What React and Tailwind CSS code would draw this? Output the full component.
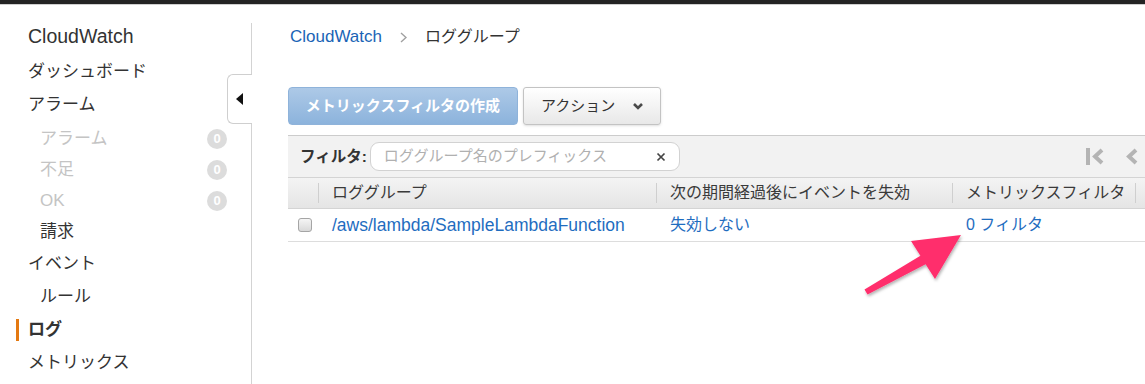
import React from 'react';

const navItems = [
    { label: 'ダッシュボード', h: 'h-[33px] mt-[4px]', indent: false },
    { label: 'アラーム', h: 'h-[33px]', indent: false },
    { label: 'アラーム', h: 'h-[31px] mt-[2px]', indent: true, muted: true, badge: '0' },
    { label: '不足', h: 'h-[31px]', indent: true, muted: true, badge: '0' },
    { label: 'OK', h: 'h-[31px]', indent: true, muted: true, badge: '0' },
    { label: '請求', h: 'h-[31px]', indent: true },
    { label: 'イベント', h: 'h-[33px]', indent: false },
    { label: 'ルール', h: 'h-[33px]', indent: true },
    { label: 'ログ', h: 'h-[33px]', indent: false, active: true },
    { label: 'メトリックス', h: 'h-[33px]', indent: false },
];

const Sidebar = () => (
    <div className="w-[252px] shrink-0 pt-[18px]">
        <div className="relative h-[400px] border-r border-[#d3d3d3]">
            <div className="h-[28px] flex items-center pl-[28px] text-[19.5px] text-[#333]">CloudWatch</div>
            {navItems.map((item, i) => (
                <div key={i} className={`relative flex items-center pr-[24px] ${item.h} ${item.indent ? 'pl-[40px]' : 'pl-[28px]'}`}>
                    {item.active && <div className="absolute left-[16px] top-[6px] w-[3px] h-[22px] bg-[#e47911]" />}
                    <span className={`text-[17px] ${item.muted ? 'text-[#c4c4c4]' : 'text-[#333]'} ${item.active ? 'font-bold' : ''}`}>
                        {item.label}
                    </span>
                    {item.badge && (
                        <span className="ml-auto w-[20px] h-[20px] rounded-full bg-[#dcdcdc] text-white text-[13px] font-bold flex items-center justify-center">
                            {item.badge}
                        </span>
                    )}
                </div>
            ))}
            {/* collapse tab */}
            <div className="absolute top-[51px] right-[-1px] w-[25px] h-[50px] bg-white border border-r-0 border-[#cfcfcf] rounded-l-[6px] flex items-center justify-center">
                <svg width="8" height="12" viewBox="0 0 8 12">
                    <polygon points="7,0 7,12 0,6" fill="#111" />
                </svg>
            </div>
        </div>
    </div>
);

const PagerFirst = () => (
    <svg width="19" height="17" viewBox="0 0 19 17">
        <rect x="0" y="0" width="4" height="17" fill="#b4b4b4" />
        <polyline points="16,2 9,8.5 16,15" fill="none" stroke="#b4b4b4" strokeWidth="4" />
    </svg>
);

const PagerPrev = () => (
    <svg width="13" height="17" viewBox="0 0 13 17">
        <polyline points="10,2 3,8.5 10,15" fill="none" stroke="#b4b4b4" strokeWidth="4" />
    </svg>
);

const App = () => {
    return (
        <div className="relative w-[1145px] h-[384px] overflow-hidden bg-white font-['Liberation_Sans','Noto_Sans_CJK_JP',sans-serif]">
            <div className="h-[4px] bg-[#232323] border-b border-[#cfcfcf] box-content" />
            <div className="flex">
                <Sidebar />

                <div className="pl-[36px] pt-[17px] w-[936px] shrink-0">
                    {/* breadcrumb */}
                    <div className="h-[30px] flex items-center text-[17px]">
                        <span className="text-[#1a64b6] ml-[2px]">CloudWatch</span>
                        <svg className="mx-[18px]" width="7" height="11" viewBox="0 0 7 11">
                            <polyline points="1,1 6,5.5 1,10" fill="none" stroke="#a0a0a0" strokeWidth="1.4" />
                        </svg>
                        <span className="text-[16px] text-[#333]">ロググループ</span>
                    </div>

                    {/* buttons */}
                    <div className="mt-[35px] flex gap-[5px] h-[38px]">
                        <button className="w-[230px] h-full rounded-[4px] border border-[#8fb3da] bg-linear-to-b from-[#adc9e7] to-[#8cb3dc] text-white text-[15px] font-bold">
                            メトリックスフィルタの作成
                        </button>
                        <button className="w-[138px] h-full rounded-[3px] border border-[#c3c3c3] bg-linear-to-b from-white to-[#e8e8e8] text-[#333] text-[15px] flex items-center pl-[17px] shadow-sm">
                            アクション
                            <svg className="ml-[17px]" width="12" height="10" viewBox="0 0 12 10">
                                <polyline points="2,3 6,7 10,3" fill="none" stroke="#4a4a4a" strokeWidth="2.6" />
                            </svg>
                        </button>
                    </div>

                    {/* filter bar */}
                    <div className="mt-[10px] h-[42px] border-t border-[#cccccc] bg-[#f2f2f2] flex items-center pl-[12px]">
                        <span className="text-[15.5px] font-bold text-[#333]">フィルタ:</span>
                        <div className="ml-[3px] w-[310px] h-[29px] bg-white border border-[#d2d2d2] rounded-[9px] flex items-center pl-[13px] pr-[13px]">
                            <span className="text-[15px] text-[#b0b0b0]">ロググループ名のプレフィックス</span>
                            <svg className="ml-auto" width="10" height="10" viewBox="0 0 10 10">
                                <path d="M1.5 1.5 L8.5 8.5 M8.5 1.5 L1.5 8.5" stroke="#444" strokeWidth="1.7" />
                            </svg>
                        </div>
                        <div className="ml-auto flex items-center gap-[21px] pr-[49px]">
                            <PagerFirst />
                            <PagerPrev />
                        </div>
                    </div>

                    {/* table header */}
                    <div className="grid grid-cols-[30px_338px_296px_183px_1fr] h-[32px] bg-linear-to-b from-[#f4f4f4] to-[#e5e5e5] border-t border-b border-[#d4d4d4] text-[16px] text-[#3a3a3a]">
                        <div />
                        {['ロググループ', '次の期間経過後にイベントを失効', 'メトリックスフィルタ', ''].map((label, i) => (
                            <div key={i} className="flex items-center">
                                <div className="w-px h-[20px] bg-[#cfcfcf]" />
                                <span className="ml-[13px]">{label}</span>
                            </div>
                        ))}
                    </div>

                    {/* row */}
                    <div className="grid grid-cols-[30px_338px_296px_183px_1fr] h-[33px] border-b border-[#dddddd] text-[#1f6dbf] items-center">
                        <div className="pl-[10px] flex items-center">
                            <div className="w-[14px] h-[14px] rounded-[3px] border border-[#a5a5a5] bg-linear-to-b from-[#f5f5f5] to-[#d9d9d9]" />
                        </div>
                        <div className="pl-[14px] text-[17.5px]">/aws/lambda/SampleLambdaFunction</div>
                        <div className="pl-[14px] text-[16px]">失効しない</div>
                        <div className="pl-[14px] text-[16px]">0 フィルタ</div>
                        <div />
                    </div>
                </div>
            </div>

            {/* annotation arrow */}
            <svg className="absolute inset-0 pointer-events-none" width="1145" height="384" viewBox="0 0 1145 384">
                <defs>
                    <filter id="arrowShadow" x="-20%" y="-20%" width="140%" height="140%">
                        <feDropShadow dx="1" dy="2" stdDeviation="1.5" floodColor="#000" floodOpacity="0.3" />
                    </filter>
                </defs>
                <polygon
                    points="961,235 911,241 920.4,255.7 864.5,289.4 867.5,294.6 925.6,264.3 935,279"
                    fill="#ff2e6c"
                    filter="url(#arrowShadow)"
                />
            </svg>
        </div>
    );
};

export default App;
